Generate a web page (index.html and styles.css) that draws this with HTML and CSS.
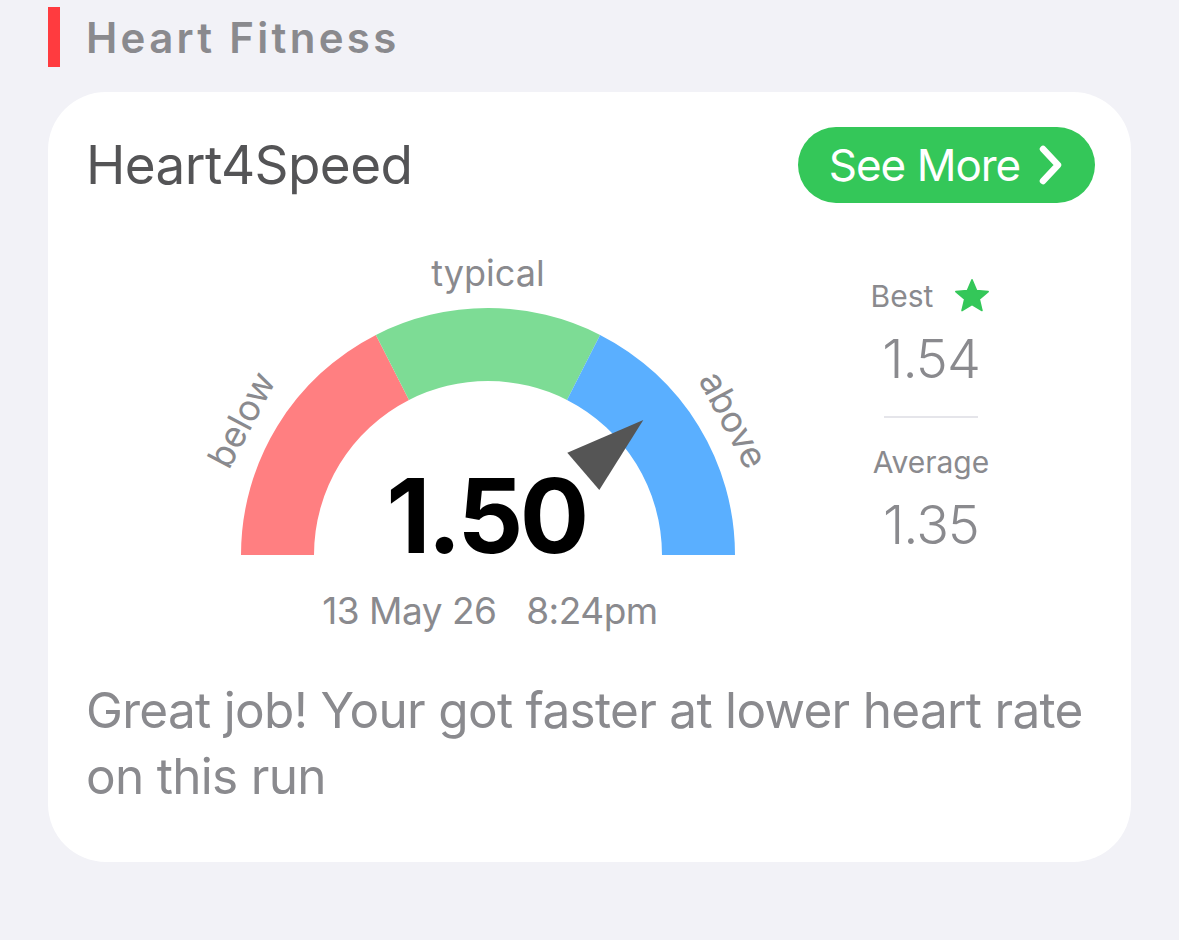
FILE: index.html
```html
<!DOCTYPE html>
<html lang="en">
<head>
    <meta charset="UTF-8">
    <meta name="viewport" content="width=device-width, initial-scale=1.0">
    <title>Heart Fitness</title>
    <link rel="stylesheet" href="styles.css">
</head>
<body>

<div class="section-head">
    <span class="section-bar"></span>
    <h2>Heart Fitness</h2>
</div>

<div class="card">
    <div class="card-top">
        <h3>Heart4Speed</h3>
        <button class="btn-more">See More
            <svg class="chevron" viewBox="0 0 26 40" width="26" height="40">
                <path d="M5 4 L20 20 L5 36" fill="none" stroke="#fff" stroke-width="6.5" stroke-linecap="round" stroke-linejoin="round"/>
            </svg>
        </button>
    </div>

    <div class="gauge-row">
        <div class="gauge">
            <svg class="gauge-svg" viewBox="0 0 580 330" width="580" height="330">
                <!-- segments: below / typical / above -->
                <path d="M41 315 A247 247 0 0 1 175.9 94.9 L209 160 A174 174 0 0 0 114 315 Z" fill="#ff7f81"/>
                <path d="M175.9 94.9 A247 247 0 0 1 400.1 94.9 L367 160 A174 174 0 0 0 209 160 Z" fill="#7ddc95"/>
                <path d="M400.1 94.9 A247 247 0 0 1 535 315 L462 315 A174 174 0 0 0 367 160 Z" fill="#5aafff"/>

                <text class="gauge-label" x="288" y="46" text-anchor="middle">typical</text>
                <text class="gauge-label" transform="translate(44 181) rotate(-62)" text-anchor="middle" dominant-baseline="middle">below</text>
                <text class="gauge-label" transform="translate(531 181) rotate(62)" text-anchor="middle" dominant-baseline="middle">above</text>

                <!-- needle -->
                <polygon points="443.3,180 367.3,212.7 399.3,250" fill="#555555"/>

                <text class="gauge-value" x="286" y="313" text-anchor="middle">1.50</text>
            </svg>
            <div class="gauge-date">13 May 26&nbsp;&nbsp;&nbsp;8:24pm</div>
        </div>

        <div class="stats">
            <div class="stat-label best">Best
                <svg class="star" viewBox="0 0 24 24" width="38" height="38">
                    <path d="M12 1.8 L14.9 8.6 L22.2 9.2 L16.6 14 L18.3 21.2 L12 17.4 L5.7 21.2 L7.4 14 L1.8 9.2 L9.1 8.6 Z" fill="#34c759" stroke="#34c759" stroke-width="1" stroke-linejoin="round"/>
                </svg>
            </div>
            <div class="stat-value">1.54</div>
            <div class="stat-divider"></div>
            <div class="stat-label">Average</div>
            <div class="stat-value">1.35</div>
        </div>
    </div>

    <p class="summary">Great job! Your got faster at lower heart rate on this run</p>
</div>

</body>
</html>
```

FILE: styles.css
```css
/* page */
body {
    font-family: Inter, "Noto Sans", sans-serif;
    background-color: #f2f2f7;
    margin: 0;
    padding: 0;
    width: 1179px;
    height: 940px;
    overflow: hidden;
}

/* section heading */
.section-head {
    display: flex;
    align-items: center;
    height: 60px;
    padding: 7px 0 0 48px;
}
.section-bar {
    width: 12px;
    height: 60px;
    background-color: #ff3b3f;
}
.section-head h2 {
    margin: 0 0 0 26px;
    font-size: 42px;
    font-weight: 600;
    letter-spacing: 3.3px;
    color: #8a8a8e;
}

/* card */
.card {
    margin: 25px 48px 0 48px;
    height: 770px;
    box-sizing: border-box;
    background-color: #fff;
    border-radius: 58px;
    padding: 35px 36px 0 38px;
}
.card-top {
    display: flex;
    justify-content: space-between;
    align-items: center;
    height: 76px;
}
.card-top h3 {
    margin: 0;
    font-size: 53px;
    font-weight: 400;
    color: #545456;
    letter-spacing: -0.6px;
}
.btn-more {
    display: flex;
    align-items: center;
    justify-content: center;
    gap: 18px;
    width: 297px;
    height: 76px;
    border: none;
    border-radius: 38px;
    background-color: #34c759;
    color: #fff;
    font-family: Inter, sans-serif;
    font-size: 44px;
    letter-spacing: -1px;
    padding: 0 0 0 0;
}
.chevron {
    display: block;
}

/* gauge */
.gauge-row {
    display: flex;
    margin-top: 37px;
}
.gauge {
    margin-left: 114px;
    width: 580px;
}
.gauge-svg {
    display: block;
    overflow: visible;
}
.gauge-label {
    font-family: Inter, sans-serif;
    font-size: 36px;
    fill: #8a8a8e;
}
.gauge-value {
    font-family: Inter, sans-serif;
    font-size: 103px;
    font-weight: 700;
    fill: #000;
    letter-spacing: -3.5px;
}
.gauge-date {
    margin-top: 18px;
    text-align: center;
    font-size: 37px;
    color: #8a8a8e;
    letter-spacing: -0.5px;
}

/* best / average */
.stats {
    width: 160px;
    margin-left: 71px;
    margin-top: 36px;
    display: flex;
    flex-direction: column;
    align-items: center;
    color: #8a8a8e;
}
.stat-label {
    font-size: 30px;
    line-height: 40px;
    margin-bottom: 6px;
}
.stat-label.best {
    display: flex;
    align-items: center;
    gap: 20px;
}
.stat-value {
    font-size: 54px;
    font-weight: 300;
    line-height: 74px;
    letter-spacing: -1px;
}
.stat-divider {
    width: 94px;
    height: 2px;
    background-color: #e5e5ea;
    margin: 20px 0 24px;
}

/* text under gauge */
.summary {
    margin: 44px 0 0 0;
    font-size: 49.5px;
    line-height: 66px;
    color: #8a8a8e;
    letter-spacing: -0.7px;
}
```
